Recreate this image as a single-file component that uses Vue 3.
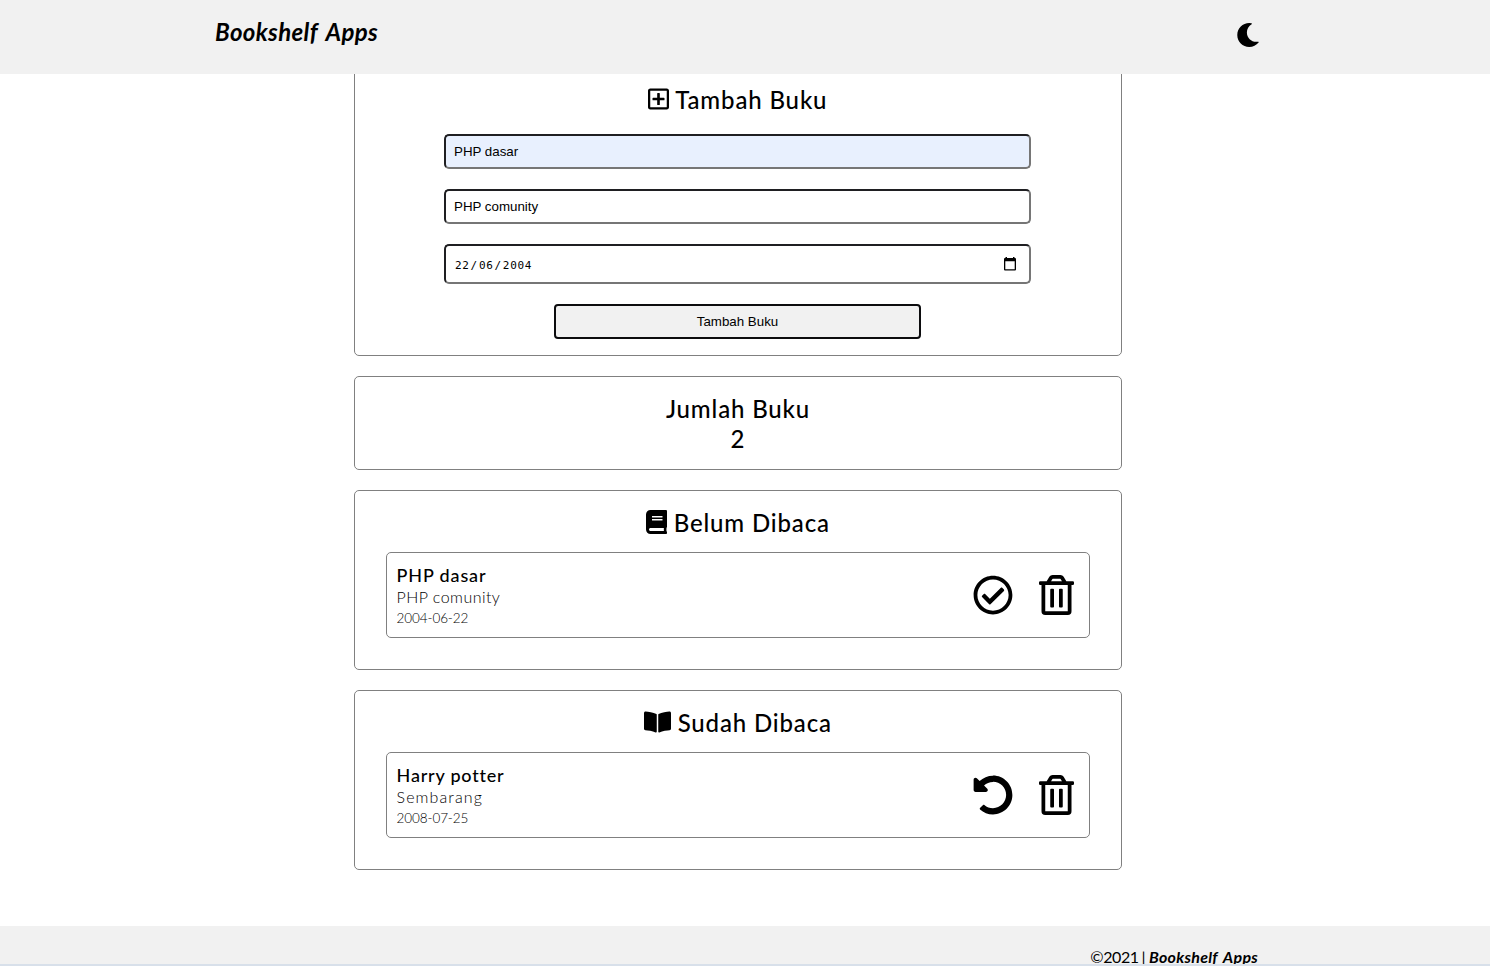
<script setup>
import { ref } from 'vue'

const title = ref('PHP dasar')
const author = ref('PHP comunity')

const icons = {
  check: 'M256 8C119.033 8 8 119.033 8 256s111.033 248 248 248 248-111.033 248-248S392.967 8 256 8zm0 48c110.532 0 200 89.451 200 200 0 110.532-89.451 200-200 200-110.532 0-200-89.451-200-200 0-110.532 89.451-200 200-200m140.204 130.267l-22.536-22.718c-4.667-4.705-12.265-4.736-16.97-.068L215.346 303.697l-59.792-60.277c-4.667-4.705-12.265-4.736-16.97-.069l-22.719 22.536c-4.705 4.667-4.736 12.265-.068 16.971l90.781 91.516c4.667 4.705 12.265 4.736 16.97.068l172.589-171.204c4.704-4.668 4.734-12.266.067-16.971z',
  undo: 'M255.545 8c-66.269.119-126.438 26.233-170.86 68.685L48.971 40.971C33.851 25.851 8 36.559 8 57.941V192c0 13.255 10.745 24 24 24h134.059c21.382 0 32.09-25.851 16.971-40.971l-41.75-41.75c30.864-28.899 70.801-44.907 113.23-45.273 92.398-.798 170.283 73.977 169.484 169.442C423.236 348.009 349.816 424 256 424c-41.127 0-79.997-14.678-110.63-41.556-4.743-4.161-11.906-3.908-16.368.553L89.34 422.659c-4.872 4.872-4.631 12.815.482 17.433C133.798 479.813 192.074 504 256 504c136.966 0 247.999-111.033 248-247.998C504.001 119.193 392.354 7.755 255.545 8z',
  trash: 'M268 416h24a12 12 0 0 0 12-12V188a12 12 0 0 0-12-12h-24a12 12 0 0 0-12 12v216a12 12 0 0 0 12 12zM432 80h-82.41l-34-56.7A48 48 0 0 0 274.41 0H173.59a48 48 0 0 0-41.16 23.3L98.41 80H16A16 16 0 0 0 0 96v16a16 16 0 0 0 16 16h16v336a48 48 0 0 0 48 48h288a48 48 0 0 0 48-48V128h16a16 16 0 0 0 16-16V96a16 16 0 0 0-16-16zM171.84 50.91A6 6 0 0 1 177 48h94a6 6 0 0 1 5.15 2.91L293.61 80H154.39zM368 464H80V128h288zm-212-48h24a12 12 0 0 0 12-12V188a12 12 0 0 0-12-12h-24a12 12 0 0 0-12 12v216a12 12 0 0 0 12 12z',
  book: 'M448 360V24c0-13.3-10.7-24-24-24H96C43 0 0 43 0 96v320c0 53 43 96 96 96h328c13.3 0 24-10.7 24-24v-16c0-7.5-3.5-14.3-8.9-18.7-4.2-15.4-4.2-59.3 0-74.7 5.4-4.3 8.9-11.1 8.9-18.6zM128 134c0-3.3 2.7-6 6-6h212c3.3 0 6 2.7 6 6v20c0 3.3-2.7 6-6 6H134c-3.3 0-6-2.7-6-6v-20zm0 64c0-3.3 2.7-6 6-6h212c3.3 0 6 2.7 6 6v20c0 3.3-2.7 6-6 6H134c-3.3 0-6-2.7-6-6v-20zm253.4 250H96c-17.7 0-32-14.3-32-32 0-17.6 14.4-32 32-32h285.4c-1.9 17.1-1.9 46.9 0 64z',
  open: 'M542.22 32.05c-54.8 3.11-163.72 14.43-230.96 55.59-4.64 2.84-7.27 7.89-7.27 13.17v363.87c0 11.55 12.63 18.85 23.28 13.49 69.18-34.82 169.23-44.32 218.7-46.92 16.89-.89 30.02-14.43 30.02-30.66V62.75c.01-17.71-15.35-31.74-33.77-30.7zM264.73 87.64C197.5 46.48 88.58 35.17 33.78 32.05 15.36 31.01 0 45.04 0 62.75V400.6c0 16.24 13.13 29.78 30.02 30.66 49.49 2.6 149.59 12.11 218.77 46.95 10.62 5.35 23.21-1.94 23.21-13.46V100.63c0-5.29-2.62-10.14-7.27-12.99z'
}

const shelves = [
  { key: 'unread', title: 'Belum Dibaca', icon: 'book', box: '0 0 448 512', action: 'check', book: { title: 'PHP dasar', author: 'PHP comunity', date: '2004-06-22' } },
  { key: 'read', title: 'Sudah Dibaca', icon: 'open', box: '0 0 576 512', action: 'undo', book: { title: 'Harry potter', author: 'Sembarang', date: '2008-07-25' } }
]
</script>

<template>
  <div class="page">
    <header class="topbar">
      <h1 class="brand">Bookshelf Apps</h1>
      <svg class="moon" viewBox="0 0 512 512"><path d="M283.211 512c78.962 0 151.079-35.925 198.857-94.792 7.068-8.708-.639-21.43-11.562-19.35-124.203 23.654-238.262-71.576-238.262-196.954 0-72.222 38.662-138.635 101.498-174.394 9.686-5.512 7.25-20.197-3.756-22.23A258.156 258.156 0 0 0 283.211 0c-141.309 0-256 114.511-256 256 0 141.309 114.511 256 256 256z" /></svg>
    </header>

    <main class="content">
      <section class="card form-card">
        <h2 class="heading">
          <svg class="plus" viewBox="0 0 448 512"><path d="M352 240v32c0 6.600-5.400 12-12 12h-88v88c0 6.600-5.400 12-12 12h-32c-6.600 0-12-5.400-12-12v-88h-88c-6.600 0-12-5.400-12-12v-32c0-6.600 5.400-12 12-12h88v-88c0-6.600 5.400-12 12-12h32c6.600 0 12 5.400 12 12v88h88c6.600 0 12 5.400 12 12zm96-160v352c0 26.500-21.500 48-48 48H48c-26.500 0-48-21.500-48-48V80c0-26.500 21.500-48 48-48h352c26.500 0 48 21.500 48 48zm-48 346V86c0-3.300-2.700-6-6-6H54c-3.300 0-6 2.700-6 6v340c0 3.300 2.700 6 6 6h340c3.300 0 6-2.700 6-6z" /></svg>
          <span>Tambah Buku</span>
        </h2>
        <form class="form" @submit.prevent>
          <input v-model="title" class="field filled" type="text" />
          <input v-model="author" class="field" type="text" />
          <div class="field date">
            <span class="date-text">22<i>/</i>06<i>/</i>2004</span>
            <svg class="calendar" viewBox="0 0 14 14"><path d="M2.500 0h1.500v1h6V0h1.500v1h.5q1 0 1 1v10.500q0 1-1 1H2q-1 0-1-1V2q0-1 1-1h.5zM2.300 4.300v8h9.400v-8z" /></svg>
          </div>
          <button class="submit" type="submit">Tambah Buku</button>
        </form>
      </section>

      <section class="card count">
        <h2 class="heading total">Jumlah Buku</h2>
        <p class="heading">2</p>
      </section>

      <section v-for="s in shelves" :key="s.key" class="card shelf" :class="s.key">
        <h2 class="heading">
          <svg :class="s.icon" :viewBox="s.box"><path :d="icons[s.icon]" /></svg>
          <span class="label">{{ s.title }}</span>
        </h2>
        <article class="item">
          <div class="info">
            <h3 class="name">{{ s.book.title }}</h3>
            <p class="author">{{ s.book.author }}</p>
            <p class="year">{{ s.book.date }}</p>
          </div>
          <div class="actions">
            <svg class="action" viewBox="0 0 512 512"><path :d="icons[s.action]" /></svg>
            <svg class="trash" viewBox="0 0 448 512"><path :d="icons.trash" /></svg>
          </div>
        </article>
      </section>
    </main>

    <footer class="footer">
      <span class="copy">©2021 |</span>
      <span class="sign">Bookshelf Apps</span>
    </footer>
  </div>
</template>

<style>
body {
  background: #fff;
  overflow: hidden;
}
</style>

<style scoped>
* {
  box-sizing: border-box;
  margin: 0;
}
.page {
  height: 966px;
  overflow: hidden;
  display: flex;
  flex-direction: column;
  font-family: Lato, sans-serif;
  color: #000;
}
svg {
  display: block;
  flex: none;
}
.topbar {
  position: relative;
  z-index: 1;
  flex: none;
  height: 74px;
  padding: 17px 230px 0 215px;
  display: flex;
  justify-content: space-between;
  background: #f1f1f1;
}
.brand {
  font-size: 24px;
  line-height: 30px;
  font-weight: 700;
  font-style: italic;
  letter-spacing: 0.35px;
  word-spacing: 3px;
  white-space: nowrap;
}
.moon {
  width: 24px;
  height: 24px;
  margin-top: 6px;
}
.content {
  flex: none;
  height: 852px;
  margin-top: -6px;
  margin-bottom: 6px;
  padding-right: 14px;
  display: flex;
  flex-direction: column;
  align-items: center;
  gap: 20px;
}
.card {
  width: 768px;
  border: 1px solid #808080;
  border-radius: 5px;
  padding: 16px 31px;
}
.heading {
  display: flex;
  justify-content: center;
  align-items: center;
  gap: 6.5px;
  height: 30px;
  font-size: 24px;
  line-height: 30px;
  font-weight: 500;
  letter-spacing: 0.85px;
  white-space: nowrap;
}
.label {
  padding-top: 2px;
}
.form-card {
  height: 288px;
}
.form-card .heading {
  padding-right: 1px;
}
.form {
  margin-top: 19px;
  padding-right: 2px;
  display: flex;
  flex-direction: column;
  align-items: center;
  gap: 20px;
}
.plus,
.book {
  width: 21px;
  height: 24px;
}
.plus {
  margin-bottom: 2px;
}
.open {
  width: 27px;
  height: 24px;
}
.field {
  width: 587px;
  height: 35px;
  padding: 0 8px 0 8.5px;
  border: 2px solid;
  border-color: #1f1f22 #767676 #767676 #1f1f22;
  border-radius: 5px;
  background: #fff;
  color: #000;
  font-family: "Liberation Sans", Arial, sans-serif;
  font-size: 13.333px;
  outline: none;
}
.filled {
  background: #e8f0fe;
}
.date {
  height: 40px;
  padding: 0 12px 0 9.5px;
  display: flex;
  align-items: center;
  justify-content: space-between;
}
.date-text {
  padding-top: 2px;
  font-family: "DejaVu Sans Mono", monospace;
  font-size: 11px;
  letter-spacing: 0.68px;
}
.date-text i {
  font-style: normal;
  margin: 0 1px;
}
.calendar {
  width: 14px;
  height: 14px;
}
.submit {
  width: 367px;
  height: 35px;
  padding: 0 0 0 1px;
  border: 2px solid #0c0c0e;
  border-radius: 4px;
  background: #f1f1f1;
  color: #000;
  font-family: "Liberation Sans", Arial, sans-serif;
  font-size: 13.333px;
}
.count {
  height: 94px;
  padding-top: 17px;
}
.shelf {
  height: 180px;
}
.item {
  height: 86px;
  margin-top: 15px;
  padding: 11px 15px 0 9.6px;
  border: 1px solid #808080;
  border-radius: 5px;
  display: flex;
  justify-content: space-between;
}
.name {
  font-size: 18px;
  line-height: 23px;
  font-weight: 500;
  letter-spacing: 0.85px;
}
.read .name {
  letter-spacing: 0.78px;
}
.author {
  font-size: 16px;
  line-height: 20px;
  font-weight: 300;
  letter-spacing: 0.45px;
}
.read .author {
  letter-spacing: 1.1px;
}
.year {
  margin-top: 2px;
  font-size: 13.5px;
  line-height: 18px;
  font-weight: 300;
  letter-spacing: -0.1px;
}
.actions {
  display: flex;
  gap: 26px;
  padding-top: 11px;
}
.action {
  width: 40px;
  height: 40px;
}
.trash {
  width: 35px;
  height: 40px;
}
.footer {
  flex: none;
  height: 40px;
  padding: 21px 232px 0 0;
  display: flex;
  justify-content: flex-end;
  gap: 4px;
  background: #f1f1f1;
  border-bottom: 2px solid #d8e0ea;
  overflow: hidden;
  font-size: 16px;
  line-height: 20px;
  white-space: nowrap;
}
.copy {
  letter-spacing: -0.4px;
  word-spacing: -1px;
}
.sign {
  font-weight: 700;
  font-style: italic;
  letter-spacing: 0.25px;
  word-spacing: 2px;
}
</style>
